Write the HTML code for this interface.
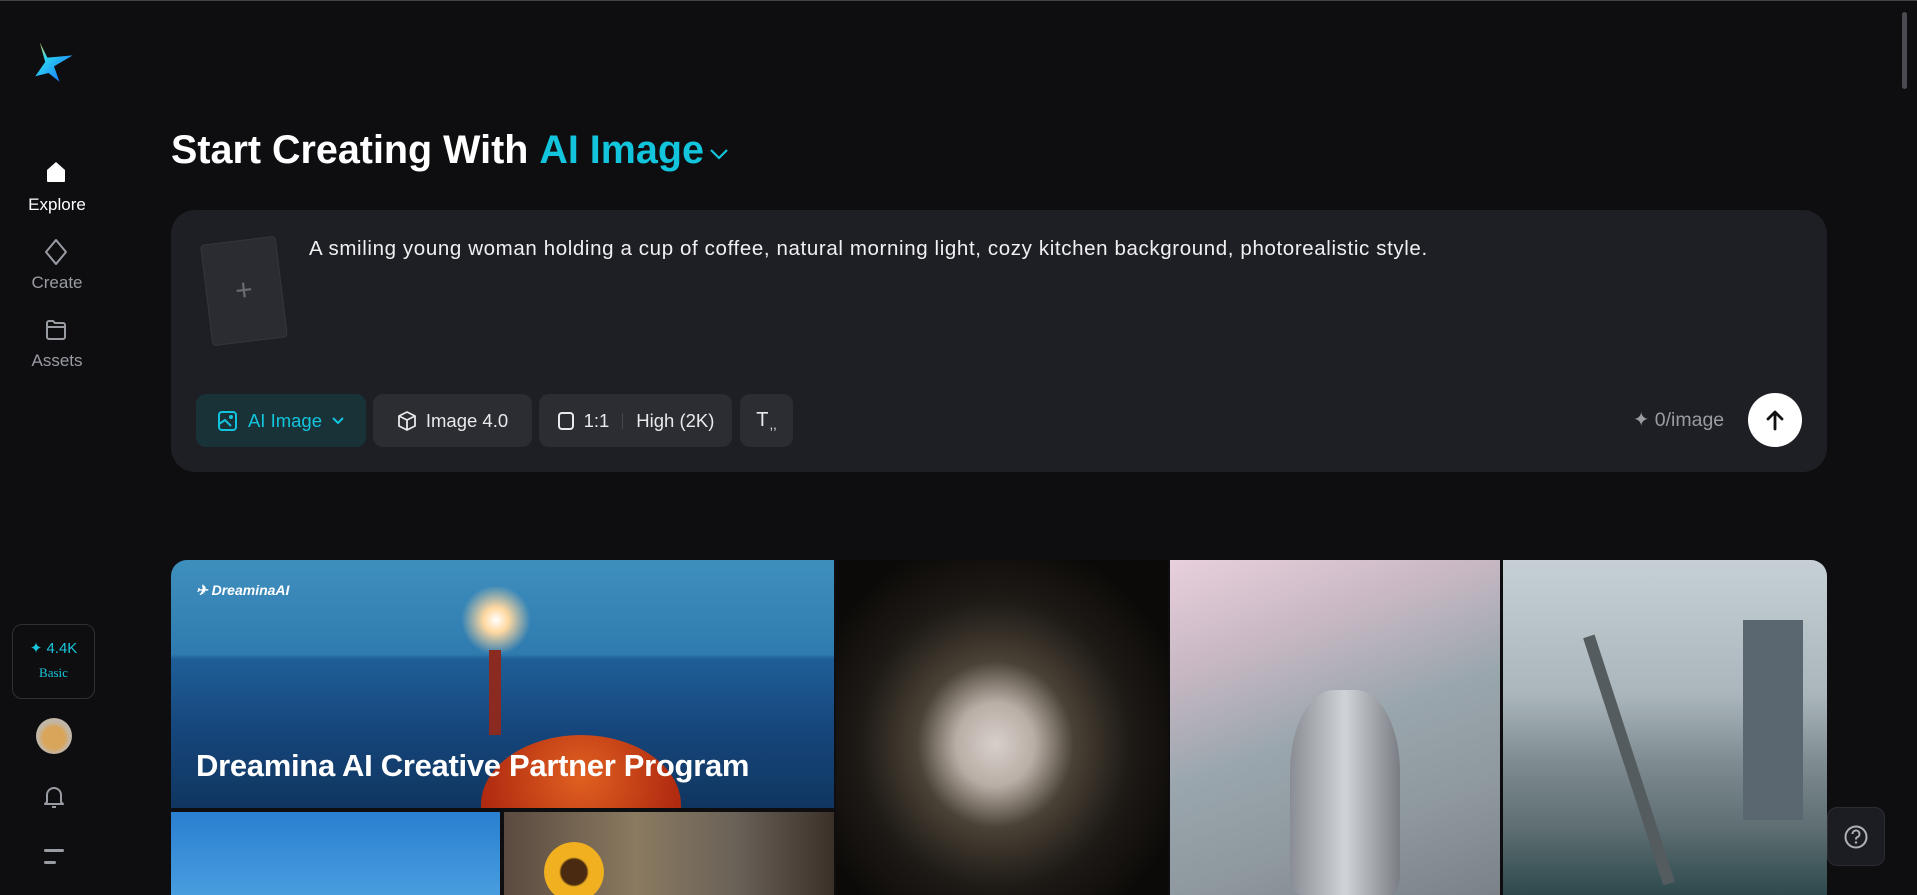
<!DOCTYPE html>
<html><head><meta charset="utf-8"><style>
*{margin:0;padding:0;box-sizing:border-box}
html,body{width:1917px;height:895px;overflow:hidden;background:#0e0e11;font-family:"Liberation Sans",sans-serif;color:#fff}
.abs{position:absolute}
.nav{position:absolute;left:0;width:114px;text-align:center;font-size:17px;color:#9a9ca3}
.btn{position:absolute;top:394px;height:53px;border-radius:10px;background:#2b2d33;display:flex;align-items:center;justify-content:center;font-size:18.5px;color:#e8e9ec;gap:9px}
.tile{position:absolute;overflow:hidden}
</style></head><body>
<div class="abs" style="left:0;top:0;width:1917px;height:1px;background:#444"></div>
<svg class="abs" style="left:32px;top:40px" width="44" height="44" viewBox="0 0 40 40">
<defs><linearGradient id="lg" x1="0" y1="0" x2="1" y2="1"><stop offset="0" stop-color="#ffd23a"/><stop offset=".35" stop-color="#2bd0f0"/><stop offset="1" stop-color="#1560ff"/></linearGradient></defs>
<path d="M7 2 L14 16 L37 14 L20 24 L25 38 L15 30 L3 33 L12 20 Z" fill="url(#lg)"/></svg>
<svg class="abs" style="left:44px;top:160px" width="24" height="24" viewBox="0 0 24 24"><path d="M3 10 L12 2 L21 10 V21 a1 1 0 0 1-1 1 H4 a1 1 0 0 1-1-1Z" fill="#fff"/></svg>
<div class="nav" style="top:195px;color:#fff">Explore</div>
<svg class="abs" style="left:43px;top:238px" width="26" height="28" viewBox="0 0 26 28"><path d="M13 2 L23 14 L13 26 L3 14 Z" fill="none" stroke="#9a9ca3" stroke-width="2" stroke-linejoin="round"/></svg>
<div class="nav" style="top:273px">Create</div>
<svg class="abs" style="left:44px;top:318px" width="24" height="24" viewBox="0 0 24 24"><path d="M3 5 a2 2 0 0 1 2-2 H9 L11 5 H19 a2 2 0 0 1 2 2 V19 a2 2 0 0 1-2 2 H5 a2 2 0 0 1-2-2Z M3 9 H21" fill="none" stroke="#9a9ca3" stroke-width="2"/></svg>
<div class="nav" style="top:351px">Assets</div>
<div class="abs" style="left:12px;top:624px;width:83px;height:75px;border:1px solid #2e3036;border-radius:10px;text-align:center">
<div style="color:#19c6dc;font-size:15px;margin-top:14px">✦ 4.4K</div>
<div style="color:#19c6dc;font-size:13px;margin-top:8px;font-family:'Liberation Serif',serif">Basic</div></div>
<div class="abs" style="left:36px;top:718px;width:36px;height:36px;border-radius:50%;background:radial-gradient(circle at 50% 55%,#d9a55a 0 40%,#c2b7a6 60%)"></div>
<svg class="abs" style="left:42px;top:784px" width="24" height="26" viewBox="0 0 24 26"><path d="M5 18 V11 a7 7 0 0 1 14 0 V18 L21 20 H3 Z M10 23 H14" fill="none" stroke="#9a9ca3" stroke-width="2" stroke-linejoin="round"/></svg>
<div class="abs" style="left:44px;top:849px;width:20px;height:3px;background:#9a9ca3;border-radius:2px"></div>
<div class="abs" style="left:44px;top:861px;width:12px;height:3px;background:#9a9ca3;border-radius:2px"></div>
<div class="abs" style="left:171px;top:128px;font-size:39.5px;font-weight:bold;white-space:nowrap;display:flex;align-items:center">Start Creating With&nbsp;<span style="color:#12c4dc">AI Image</span>
<svg style="margin-left:4px;margin-top:6px" width="22" height="14" viewBox="0 0 22 14"><path d="M3 3 L11 11 L19 3" fill="none" stroke="#12c4dc" stroke-width="2.2"/></svg></div>
<div class="abs" style="left:171px;top:210px;width:1656px;height:262px;background:#1e1f24;border-radius:24px"></div>
<div class="abs" style="left:206px;top:240px;width:76px;height:102px;background:#2a2c32;border:1px solid #34363c;border-radius:4px;transform:rotate(-7deg);display:flex;align-items:center;justify-content:center;color:#6a6c72;font-size:30px;font-weight:300">+</div>
<div class="abs" style="left:309px;top:237px;font-size:20.5px;letter-spacing:.62px;color:#f0f0f2;white-space:nowrap">A smiling young woman holding a cup of coffee, natural morning light, cozy kitchen background, photorealistic style.</div>
<div class="btn" style="left:196px;width:170px;background:#183238;color:#12c4dc">
<svg width="22" height="22" viewBox="0 0 22 22"><rect x="2" y="2" width="17" height="18" rx="3" fill="none" stroke="#12c4dc" stroke-width="2"/><path d="M2 14 L8 10 L14 16" fill="none" stroke="#12c4dc" stroke-width="2"/><circle cx="14" cy="7" r="2" fill="#12c4dc"/></svg>AI Image
<svg width="14" height="10" viewBox="0 0 14 10"><path d="M2 2 L7 7 L12 2" fill="none" stroke="#12c4dc" stroke-width="2"/></svg></div>
<div class="btn" style="left:373px;width:159px">
<svg width="20" height="22" viewBox="0 0 20 22"><path d="M10 2 L18 6 V16 L10 20 L2 16 V6 Z M2 6 L10 10 L18 6 M10 10 V20" fill="none" stroke="#e8e9ec" stroke-width="1.8" stroke-linejoin="round"/></svg>Image 4.0</div>
<div class="btn" style="left:539px;width:193px">
<svg width="18" height="20" viewBox="0 0 18 20"><rect x="2" y="2" width="14" height="16" rx="3" fill="none" stroke="#e8e9ec" stroke-width="2"/></svg>1:1 <span style="width:1px;height:16px;background:#44464c;margin:0 4px"></span> High (2K)</div>
<div class="btn" style="left:740px;width:53px;font-size:20px">T<span style="font-size:13px;margin-left:-8px;margin-top:8px">,,</span></div>
<div class="abs" style="left:1633px;top:408px;font-size:19.5px;color:#9a9ca3">✦ 0/image</div>
<div class="abs" style="left:1748px;top:393px;width:54px;height:54px;border-radius:50%;background:#fff"></div>
<svg class="abs" style="left:1763px;top:408px" width="24" height="24" viewBox="0 0 24 24"><path d="M12 21 V4 M5 11 L12 4 L19 11" fill="none" stroke="#111" stroke-width="2.8" stroke-linecap="round" stroke-linejoin="round"/></svg>
<div class="abs" style="left:171px;top:560px;width:1656px;height:335px;border-radius:16px 16px 0 0;overflow:hidden">
<div class="tile" style="left:0;top:0;width:663px;height:248px;background:linear-gradient(180deg,#3f8fbd 0%,#2f7bb0 38%,#1f5e98 40%,#15457a 70%,#103660 100%)">
<div class="abs" style="left:310px;top:175px;width:200px;height:140px;border-radius:50% 50% 0 0;background:radial-gradient(ellipse at 50% 30%,#e06020,#b02a10 70%);"></div>
<div class="abs" style="left:290px;top:25px;width:70px;height:70px;border-radius:50%;background:radial-gradient(circle,#fff 0,#ffd8a0 25%,rgba(255,200,150,0) 70%)"></div>
<div class="abs" style="left:318px;top:90px;width:12px;height:85px;background:#8a2a20"></div>
<div class="abs" style="left:25px;top:22px;font-size:14px;font-style:italic;font-weight:bold">✈ DreaminaAI</div>
<div class="abs" style="left:25px;top:188px;font-size:31px;font-weight:bold;letter-spacing:-.3px">Dreamina AI Creative Partner Program</div></div>
<div class="tile" style="left:0;top:252px;width:329px;height:90px;background:linear-gradient(180deg,#2a7fd0,#4aa0e0)"></div>
<div class="tile" style="left:333px;top:252px;width:330px;height:90px;background:linear-gradient(90deg,#5a4a40,#8a7a60 40%,#6a6258 70%,#3a3028)"><div class="abs" style="left:40px;top:30px;width:60px;height:60px;border-radius:50%;background:radial-gradient(circle,#4a2a10 0 30%,#f0b020 35% 70%,rgba(0,0,0,0) 72%)"></div></div>
<div class="tile" style="left:665px;top:0;width:332px;height:335px;background:radial-gradient(ellipse at 48% 55%,#d8cfca 0,#b8aea6 16%,#4a4236 32%,#1e1a16 55%,#0c0a08 80%)"></div>
<div class="tile" style="left:999px;top:0;width:330px;height:335px;background:linear-gradient(160deg,#e8d0dc 0%,#c8b8c4 25%,#9aa6ad 50%,#8e989e 75%,#7a8288 100%)"><div class="abs" style="left:120px;top:130px;width:110px;height:205px;border-radius:40% 40% 10% 10%;background:linear-gradient(90deg,#8a8e94,#d0d3d8,#7a7e84)"></div></div>
<div class="tile" style="left:1332px;top:0;width:324px;height:335px;background:linear-gradient(180deg,#c6d0d4 0%,#aab6bc 40%,#7f8c92 60%,#5e6e72 80%,#2e4a4c 100%)"><div class="abs" style="left:120px;top:70px;width:12px;height:260px;background:#555c60;transform:rotate(-18deg)"></div><div class="abs" style="left:240px;top:60px;width:60px;height:200px;background:#5a6670"></div></div>
</div>
<div class="abs" style="left:1827px;top:807px;width:58px;height:59px;background:#1c1d22;border:1px solid #2a2c31;border-radius:10px"></div>
<svg class="abs" style="left:1843px;top:824px" width="26" height="26" viewBox="0 0 26 26"><circle cx="13" cy="13" r="10.5" fill="none" stroke="#b0b2b8" stroke-width="2"/><path d="M9.5 10 a3.5 3.5 0 1 1 4.5 3.3 c-1 .4-1 1-1 2.2" fill="none" stroke="#b0b2b8" stroke-width="2"/><circle cx="13" cy="18.5" r="1.2" fill="#b0b2b8"/></svg>
<div class="abs" style="left:1902px;top:12px;width:5px;height:77px;background:#4a4b50;border-radius:3px"></div>
</body></html>
